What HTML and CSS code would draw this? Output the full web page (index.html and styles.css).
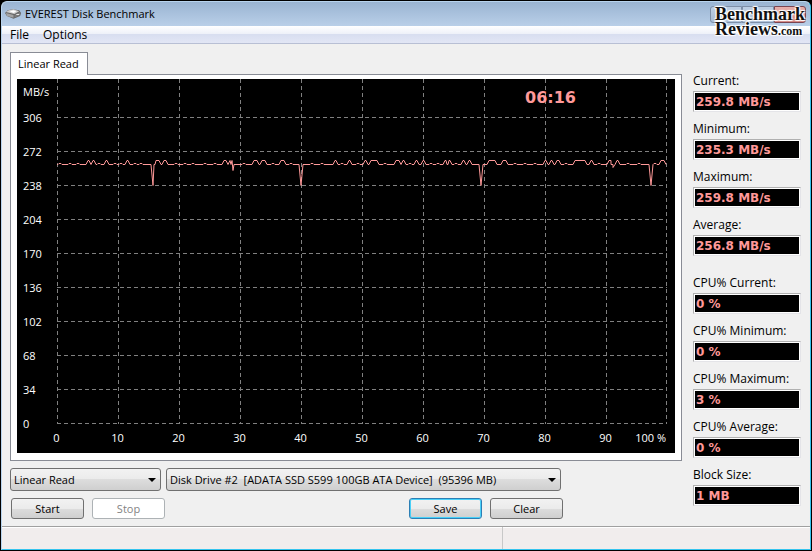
FILE: index.html
```
<!DOCTYPE html>
<html lang="en">
  <head>
    <meta charset="UTF-8" />
    <meta name="viewport" content="width=device-width, initial-scale=1.0" />
    <title>EVEREST Disk Benchmark</title>
    <link rel="stylesheet" href="styles.css">
  </head>
  <body>
    <div class="window">
      <!-- Title bar -->
      <header class="title-bar">
        <svg class="app-icon" width="17" height="12" viewBox="0 0 18 12">
          <path d="M0 5 L3 2 L8 1 L15 2 L17 5 L16 8 L9 11 L2 8Z" fill="#666" />
          <path d="M1 4 L4 2 L9 1 L15 3 L10 6Z" fill="#d0d0d0" />
          <path d="M1 5 L9 7 L9 10 L2 8Z" fill="#a4a4a4" />
          <path d="M5 3 L9 2 L12 3 L9 5Z" fill="#fff" />
          <path d="M10 7 L16 4 L16 7 L10 10Z" fill="#7c7c7c" />
          <rect x="12" y="6" width="3" height="1" fill="#eee" />
        </svg>
        <h1>EVEREST Disk Benchmark</h1>
        <div class="caption-buttons">
          <button aria-label="Minimize"></button>
          <button aria-label="Maximize"></button>
          <button class="close" aria-label="Close"></button>
        </div>
        <div class="logo">
          <div>Benchmark</div>
          <div>Reviews<small>.com</small></div>
        </div>
      </header>

      <nav class="menu-bar">
        <button>File</button>
        <button>Options</button>
      </nav>

      <main class="content">
        <section class="bench">
          <button class="tab">Linear Read</button>
          <div class="panel">
            <svg class="chart" id="chart" viewBox="0 0 658 374" role="img" aria-label="Linear read speed">
              <rect width="658" height="374" fill="#000" />
              <g id="grid" class="grid"></g>
              <polyline id="trace" class="trace" />
              <text class="axis" x="6" y="17">MB/s</text>
              <g id="labels" class="axis"></g>
              <text class="clock" x="508" y="24">06:16</text>
            </svg>
          </div>
        </section>

        <!-- Result fields -->
        <aside class="results">
          <label>Current:<input value="259.8 MB/s" readonly></label>
          <label>Minimum:<input value="235.3 MB/s" readonly></label>
          <label>Maximum:<input value="259.8 MB/s" readonly></label>
          <label>Average:<input value="256.8 MB/s" readonly></label>
          <label class="group">CPU% Current:<input value="0 %" readonly></label>
          <label>CPU% Minimum:<input value="0 %" readonly></label>
          <label>CPU% Maximum:<input value="3 %" readonly></label>
          <label>CPU% Average:<input value="0 %" readonly></label>
          <label>Block Size:<input value="1 MB" readonly></label>
        </aside>

        <form class="controls">
          <div class="selects">
            <div class="select test">
              <select aria-label="Test">
                <option>Linear Read</option>
              </select>
            </div>
            <div class="select drive">
              <select aria-label="Drive">
                <option>Disk Drive #2 &nbsp;[ADATA SSD S599 100GB ATA Device] &nbsp;(95396 MB)</option>
              </select>
            </div>
          </div>
          <div class="buttons">
            <button type="button">Start</button>
            <button type="button" disabled>Stop</button>
            <button type="button" class="save">Save</button>
            <button type="button">Clear</button>
          </div>
        </form>
      </main>

      <footer class="status-bar">
        <div class="status-main"></div>
        <div class="status-side"></div>
      </footer>
    </div>
    <script src="chart.js"></script>
  </body>
</html>
```
FILE: styles.css
```
* {
  box-sizing: border-box;
}

body {
  margin: 0;
  background-color: #000;
  color: #000;
  font-family: "Open Sans", "Noto Sans", sans-serif;
  font-size: 11px;
  line-height: 16px;
}

button,
input,
select {
  font: inherit;
  color: inherit;
}

.window {
  display: flex;
  flex-direction: column;
  min-height: calc(100vh - 2px);
  margin: 1px;
  border: 1px solid #b8d4ee;
  border-right-color: #35c4ee;
  border-bottom-color: #35c4ee;
  border-radius: 6px 6px 0 0;
  background-color: #f0f0f0;
  overflow: hidden;
}

/* Title bar */
.title-bar {
  position: relative;
  display: flex;
  align-items: center;
  gap: 3px;
  height: 24px;
  padding-left: 3px;
  background: linear-gradient(#9ab4d2, #b9cfe8);
}

.title-bar h1 {
  margin: 0;
  font-size: 11px;
  font-weight: normal;
}

.caption-buttons {
  display: flex;
  margin-left: auto;
  margin-right: 4px;
}

.caption-buttons button {
  width: 32px;
  height: 17px;
  padding: 0;
  border: 1px solid #7d8fa8;
  background: linear-gradient(#bdcfe4, #a5bbd6);
}

.caption-buttons button:first-child {
  border-radius: 3px 0 0 3px;
}

.caption-buttons .close {
  border-color: #7a4450;
  border-radius: 0 3px 3px 0;
  background: linear-gradient(#e8b0ac, #cf7a76);
}

.logo {
  position: absolute;
  top: 5px;
  right: 3px;
  z-index: 1;
  width: 92px;
  color: #111;
  font-family: "Liberation Serif", serif;
  font-size: 18px;
  font-weight: bold;
  line-height: 15px;
  text-shadow: 1px 1px 1px #fff, -1px -1px 1px #fff, 1px -1px 1px #fff, -1px 1px 1px #fff;
}

.logo small {
  font-size: 12px;
}

/* Menu */
.menu-bar {
  display: flex;
  gap: 14px;
  height: 18px;
  padding-left: 8px;
  border-bottom: 1px solid #b8bfd4;
  background: linear-gradient(#fff, #eef1f9 45%, #d8def0 50%, #e2e6f5);
  font-size: 12px;
}

.menu-bar button {
  padding: 0;
  border: 0;
  background: none;
}

/* Main area */
.content {
  display: grid;
  grid-template-columns: 1fr 108px;
  column-gap: 11px;
  padding: 8px 9px 7px 8px;
}

.tab {
  position: relative;
  display: block;
  height: 23px;
  margin-bottom: -1px;
  padding: 0 8px 0 7px;
  border: 1px solid #898c95;
  border-bottom: 0;
  background-color: #fff;
}

.panel {
  padding: 4px 6px 7px;
  border: 1px solid #898c95;
  background-color: #fff;
}

.chart {
  display: block;
  width: 100%;
}

.grid {
  stroke: #808080;
  stroke-dasharray: 4 3;
}

.trace {
  fill: none;
  stroke: #ff9999;
}

.axis {
  fill: #fff;
  font-size: 11px;
}

.clock {
  fill: #ff9999;
  font-family: "DejaVu Sans", sans-serif;
  font-size: 16px;
  font-weight: bold;
}

/* Results */
.results {
  grid-row: span 2;
  display: flex;
  flex-direction: column;
  gap: 9px;
  padding-top: 21px;
  font-size: 12px;
}

.results label {
  display: flex;
  flex-direction: column;
  gap: 2px;
}

.results .group {
  margin-top: 10px;
}

.results input {
  width: 100%;
  height: 21px;
  padding: 0 2px;
  border: 1px solid #b0b0b0;
  border-right-color: #e4e4e8;
  border-bottom-color: #e4e4e8;
  background-color: #000;
  box-shadow: inset 0 0 0 1px #fff;
  color: #ff9999;
  font-family: "DejaVu Sans", sans-serif;
  font-size: 12px;
  font-weight: bold;
}

/* Controls */
.controls {
  padding-top: 7px;
}

.selects {
  display: flex;
  gap: 5px;
}

.select {
  position: relative;
}

.select::after {
  content: "";
  position: absolute;
  top: 10px;
  right: 5px;
  border: 4px solid transparent;
  border-top-color: #000;
  border-bottom: 0;
  pointer-events: none;
}

.select select {
  width: 100%;
  height: 23px;
  padding: 0 18px 0 3px;
  border: 1px solid #707070;
  border-radius: 3px;
  appearance: none;
  background: linear-gradient(#f2f2f2, #ebebeb 50%, #dddddd 50%, #cfcfcf);
}

.test {
  width: 151px;
}

.drive {
  width: 395px;
}

.buttons {
  display: flex;
  gap: 8px;
  padding: 7px 0 0 1px;
}

.buttons button {
  width: 73px;
  height: 21px;
  padding: 0;
  border: 1px solid #707070;
  border-radius: 3px;
  background: linear-gradient(#f2f2f2, #ebebeb 50%, #dddddd 50%, #cfcfcf);
}

.buttons button:disabled {
  border-color: #adb2b5;
  background: #fff;
  color: #838383;
}

.buttons .save {
  margin-left: 236px;
  border-color: #2c7fb5;
  box-shadow: inset 0 0 0 1px #48d0f8;
}

/* Status bar */
.status-bar {
  display: flex;
  flex: 1;
  min-height: 22px;
  border-top: 1px solid #a0a0a0;
  background-color: #f1eded;
  box-shadow: inset 0 1px #fff;
}

.status-main {
  flex: 501;
  border-right: 1px solid #c8c8c8;
}

.status-side {
  flex: 307;
}
```
FILE: chart.js
```
const NS = 'http://www.w3.org/2000/svg'
const grid = document.getElementById('grid')
const labels = document.getElementById('labels')

function addLine(x1, y1, x2, y2) {
  const line = document.createElementNS(NS, 'line')
  line.setAttribute('x1', x1)
  line.setAttribute('y1', y1)
  line.setAttribute('x2', x2)
  line.setAttribute('y2', y2)
  grid.appendChild(line)
}

function addLabel(text, x, y, anchor) {
  const label = document.createElementNS(NS, 'text')
  label.setAttribute('x', x)
  label.setAttribute('y', y)
  label.setAttribute('text-anchor', anchor)
  label.textContent = text
  labels.appendChild(label)
}

// Speed scale, 34 MB/s a step
for (let i = 0; i < 10; i++) {
  const y = 344.5 - i * 34
  addLine(40, y, 650, y)
  addLabel(i * 34, 6, y + 4, 'start')
}

// Position scale, percent of the drive
for (let i = 0; i <= 10; i++) {
  const x = i < 10 ? 40.5 + i * 61 : 649.5
  addLine(x, 0, x, 345)
  if (i < 10) addLabel(i * 10, x - 1, 363, 'middle')
}
addLabel('100 %', 649, 363, 'end')

// Trace levels
const BASE = 85.5
const RIPPLE = 84.5
const PEAK = 81.5

// Bumps above the base line: [start, end]
const bumps = [
  [71, 72], [76, 77], [89, 90], [110, 111], [139, 142], [147, 149],
  [207, 209], [213, 215], [237, 240], [245, 248], [264, 267], [318, 319], [332, 333],
  [348, 349], [354, 360], [379, 382], [386, 387], [399, 400], [406, 407], [428, 429],
  [432, 433], [446, 447], [452, 453], [472, 478], [486, 489], [528, 529], [534, 535],
  [540, 542], [558, 568], [574, 575], [592, 594], [600, 601], [644, 647],
]
const ripples = [43, 53, 61, 82, 98, 104, 118, 124, 159, 168, 176, 188, 198, 227, 256, 274, 295, 305,
  325, 341, 368, 393, 414, 421, 439, 498, 508, 518, 549, 582, 611, 622, 638]
// Drops: [position, bottom]
const drops = [[136, 106.5], [216, 91.5], [284, 106.5], [464, 106.5], [596, 88.5], [634, 106.5]]

const points = [[40, BASE]]
bumps.forEach(([a, b]) => points.push([a - 2, BASE], [a, PEAK], [b, PEAK], [b + 2, BASE]))
ripples.forEach((x) => points.push([x - 2, BASE], [x - 1, RIPPLE], [x + 1, RIPPLE], [x + 2, BASE]))
drops.forEach(([x, y]) => points.push([x - 2, BASE], [x, y], [x + 2, BASE]))
points.push([649, BASE])
points.sort((a, b) => a[0] - b[0])
document.getElementById('trace').setAttribute('points', points.map((p) => p.join(',')).join(' '))
```
